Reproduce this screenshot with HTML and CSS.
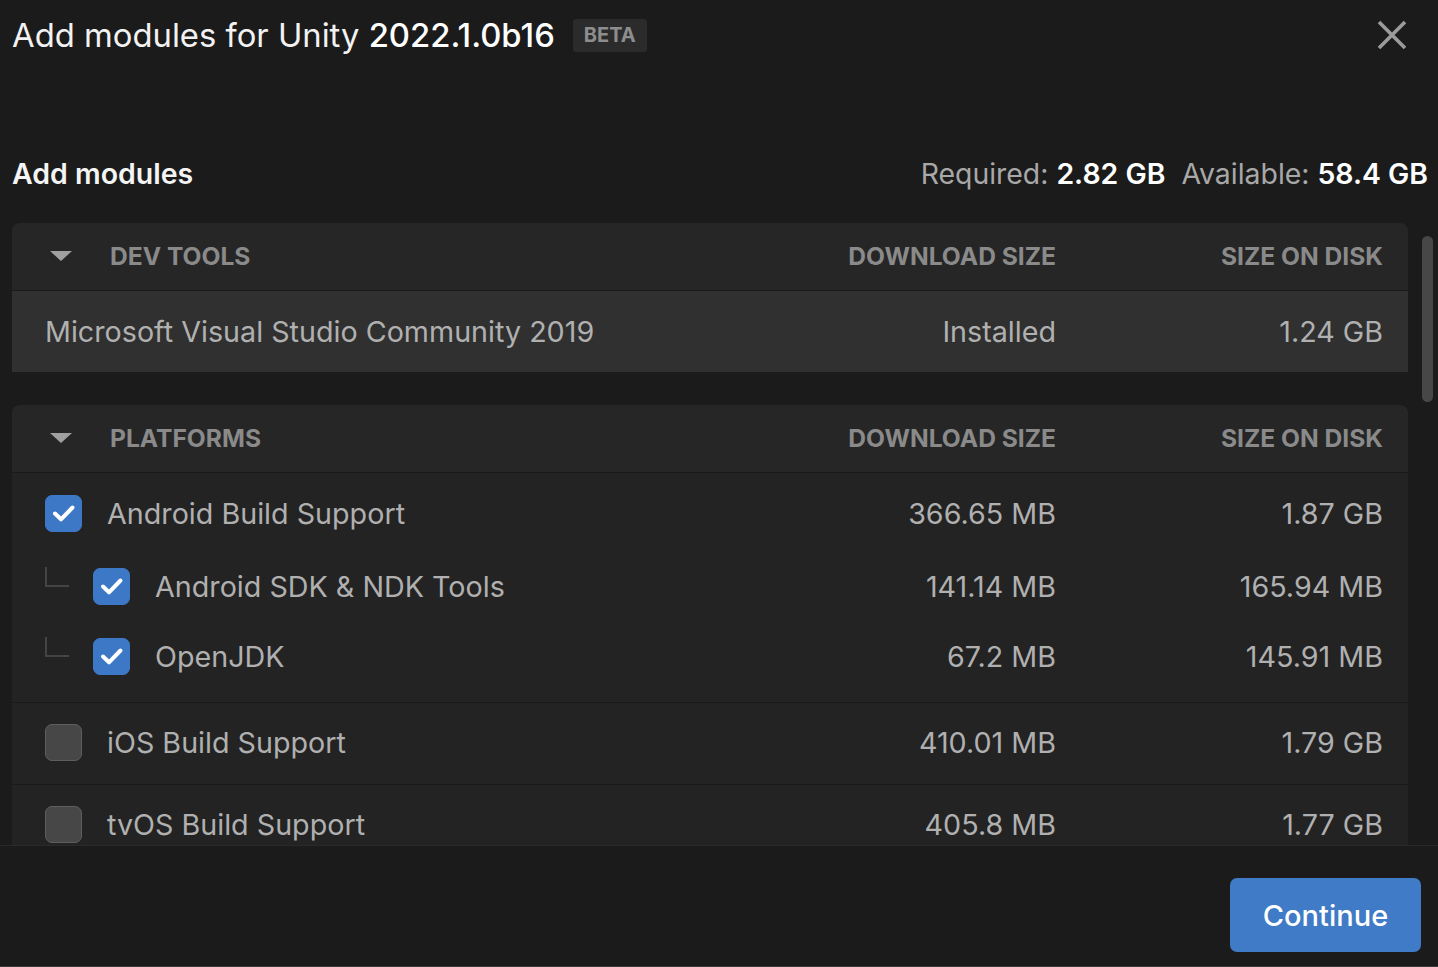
FILE: index.html
```html
<!DOCTYPE html>
<html>
<head>
<meta charset="utf-8">
<link rel="stylesheet" href="styles.css">
</head>
<body>
<div class="dialog">
  <header class="titlebar">
    <h1 class="title">Add modules for Unity <span class="version">2022.1.0b16</span></h1>
    <span class="badge">BETA</span>
    <button class="close" aria-label="Close">
      <svg width="30" height="30" viewBox="0 0 30 30"><path d="M2 2 L28 28 M28 2 L2 28" stroke="#9b9b9b" stroke-width="3.6" fill="none"/></svg>
    </button>
  </header>

  <div class="subhead">
    <h2 class="subtitle">Add modules</h2>
    <div class="space">Required: <b>2.82 GB</b>&nbsp; Available: <b>58.4 GB</b></div>
  </div>

  <div class="scroll">
    <div class="content">
      <section class="panel">
        <div class="panel-head">
          <span class="caret"></span>
          <span class="col-name">DEV TOOLS</span>
          <span class="col-dl">DOWNLOAD SIZE</span>
          <span class="col-disk">SIZE ON DISK</span>
        </div>
        <div class="row installed">
          <span class="name">Microsoft Visual Studio Community 2019</span>
          <span class="dl">Installed</span>
          <span class="disk">1.24 GB</span>
        </div>
      </section>

      <section class="panel">
        <div class="panel-head">
          <span class="caret"></span>
          <span class="col-name">PLATFORMS</span>
          <span class="col-dl">DOWNLOAD SIZE</span>
          <span class="col-disk">SIZE ON DISK</span>
        </div>
        <div class="group">
          <div class="row parent">
            <span class="cb checked"><svg viewBox="0 0 37 37"><path d="M10 18.5 L16 24.3 L27.5 12.5" stroke="#fff" stroke-width="4" fill="none" stroke-linecap="round" stroke-linejoin="round"/></svg></span>
            <span class="name">Android Build Support</span>
            <span class="dl">366.65 MB</span>
            <span class="disk">1.87 GB</span>
          </div>
          <div class="row child">
            <span class="tree"></span>
            <span class="cb checked"><svg viewBox="0 0 37 37"><path d="M10 18.5 L16 24.3 L27.5 12.5" stroke="#fff" stroke-width="4" fill="none" stroke-linecap="round" stroke-linejoin="round"/></svg></span>
            <span class="name">Android SDK &amp; NDK Tools</span>
            <span class="dl">141.14 MB</span>
            <span class="disk">165.94 MB</span>
          </div>
          <div class="row child">
            <span class="tree"></span>
            <span class="cb checked"><svg viewBox="0 0 37 37"><path d="M10 18.5 L16 24.3 L27.5 12.5" stroke="#fff" stroke-width="4" fill="none" stroke-linecap="round" stroke-linejoin="round"/></svg></span>
            <span class="name">OpenJDK</span>
            <span class="dl">67.2 MB</span>
            <span class="disk">145.91 MB</span>
          </div>
        </div>
        <div class="group single">
          <div class="row parent">
            <span class="cb"></span>
            <span class="name">iOS Build Support</span>
            <span class="dl">410.01 MB</span>
            <span class="disk">1.79 GB</span>
          </div>
        </div>
        <div class="group single">
          <div class="row parent">
            <span class="cb"></span>
            <span class="name">tvOS Build Support</span>
            <span class="dl">405.8 MB</span>
            <span class="disk">1.77 GB</span>
          </div>
        </div>
      </section>
    </div>
    <div class="scrollbar"><div class="thumb"></div></div>
  </div>

  <footer class="footer">
    <button class="continue">Continue</button>
  </footer>
</div>
</body>
</html>
```

FILE: styles.css
```css
* { box-sizing: border-box; }
html, body { margin: 0; padding: 0; }
body {
  background: #1b1b1b;
  font-family: Inter, "Noto Sans", "Liberation Sans", sans-serif;
  color: #b3b3b3;
  width: 1438px;
  height: 967px;
  overflow: hidden;
}
.dialog {
  display: flex;
  flex-direction: column;
  height: 967px;
  border-bottom: 1px solid #3a3a3a;
}
.titlebar {
  display: flex;
  align-items: center;
  height: 70px;
  padding: 0 12px;
}
.title {
  margin: 0;
  font-size: 32.8px;
  font-weight: 400;
  color: #f2f2f2;
}
.version { font-weight: 500; color: #fff; }
.badge {
  margin-left: 18px;
  background: #2b2b2b;
  color: #8d8d8d;
  font-weight: 700;
  font-size: 20px;
  padding: 6px 11px;
  border-radius: 3px;
  line-height: 21px;
}
.close {
  margin-left: auto;
  margin-right: 19px;
  background: none;
  border: 0;
  padding: 0;
  width: 30px;
  height: 30px;
  cursor: pointer;
}
.close svg { display: block; }
.subhead {
  display: flex;
  align-items: center;
  justify-content: space-between;
  padding: 0 10px 0 12px;
  margin-top: 69px;
  height: 69px;
}
.subtitle {
  margin: 0;
  font-size: 28.5px;
  font-weight: 600;
  color: #f4f4f4;
}
.space {
  font-size: 28.4px;
  color: #a8a8a8;
}
.space b { color: #fff; font-weight: 600; }
.scroll {
  margin-top: 15px;
  height: 622px;
  display: flex;
  overflow: hidden;
  padding-left: 12px;
}
.content {
  width: 1396px;
  display: flex;
  flex-direction: column;
  gap: 33px;
}
.scrollbar {
  margin-left: 14px;
  width: 11px;
  padding-top: 13px;
}
.thumb {
  height: 166px;
  background: #474747;
  border-radius: 6px;
}
.panel {
  background: #232323;
  border-radius: 8px 8px 0 0;
  overflow: hidden;
  flex: none;
}
.panel-head {
  display: flex;
  align-items: center;
  height: 68px;
  padding-bottom: 2px;
  background: #262626;
  border-bottom: 1px solid #1a1a1a;
  font-size: 24.6px;
  font-weight: 700;
  color: #8a8a8a;
  padding-left: 38px;
  padding-right: 25px;
}
.caret {
  width: 0; height: 0;
  border-left: 11px solid transparent;
  border-right: 11px solid transparent;
  border-top: 10px solid #a0a0a0;
  margin-right: 38px;
}
.col-name { flex: 1; }
.col-dl { width: 360px; text-align: right; }
.col-disk { width: 327px; text-align: right; }
.row {
  display: flex;
  align-items: center;
  font-size: 28.7px;
  color: #b0b0b0;
  padding: 0 25px 0 33px;
}
.row .name { flex: 1; }
.row .dl { width: 360px; text-align: right; }
.row .disk { width: 327px; text-align: right; }
.installed {
  background: #303030;
  height: 81px;
}
.group {
  padding: 2px 0 11px;
  border-bottom: 1px solid #1a1a1a;
}
.group.single { padding: 0; }
.group.single .row.parent { height: 81px; padding-bottom: 2px; }
.row.parent { height: 76px; }
.row.child { height: 70px; }
.cb {
  width: 37px;
  height: 37px;
  border-radius: 7px;
  background: #474747;
  border: 1px solid #5e5e5e;
  margin-right: 25px;
  flex: none;
  display: flex;
  align-items: center;
  justify-content: center;
}
.cb svg { width: 37px; height: 37px; flex: none; }
.cb.checked { background: #3d78c6; border-color: #3d78c6; }
.tree {
  width: 24px;
  height: 20px;
  border-left: 2px solid #444;
  border-bottom: 2px solid #444;
  margin-right: 24px;
  margin-top: -18px;
  flex: none;
}
.footer {
  flex: 1;
  border-top: 1px solid #2a2a2a;
  display: flex;
  justify-content: flex-end;
  align-items: flex-start;
  padding: 32px 17px 0 0;
  background: #1b1b1b;
}
.continue {
  width: 191px;
  height: 74px;
  background: #3f7bc6;
  color: #fff;
  border: 0;
  border-radius: 7px;
  font-family: inherit;
  font-size: 29px;
  font-weight: 500;
}
```
